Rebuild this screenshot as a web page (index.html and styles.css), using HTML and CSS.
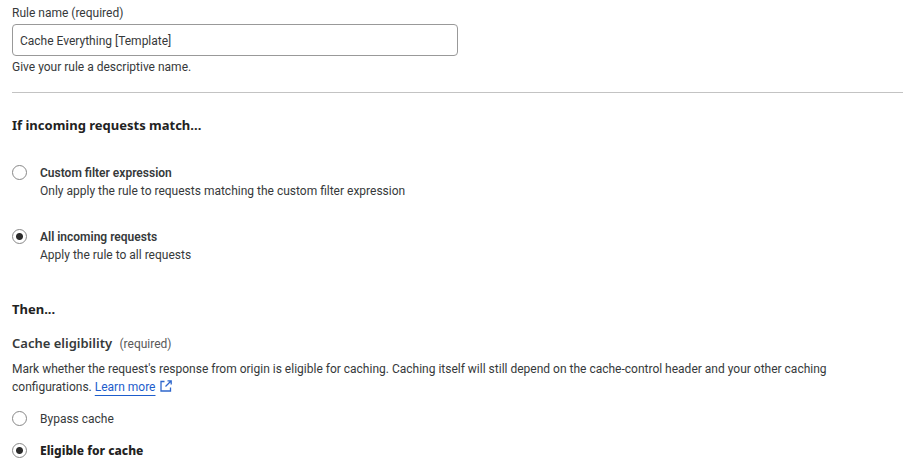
FILE: index.html
```html
<!DOCTYPE html>
<html lang="en">
<head>
<meta charset="utf-8">
<title>Cache rule</title>
<meta name="viewport" content="width=device-width, initial-scale=1.0">
<link rel="stylesheet" href="styles.css">
</head>
<body>
<form class="rule-form">
  <div class="field">
    <label for="rule-name">Rule name (required)</label>
    <input class="text-input" type="text" id="rule-name" value="Cache Everything [Template]" aria-describedby="rule-help">
    <p class="help" id="rule-help">Give your rule a descriptive name.</p>
  </div>

  <section class="match">
    <h2>If incoming requests match...</h2>
    <div class="filters">
      <label class="option">
        <input type="radio" name="match">
        <span><strong>Custom filter expression</strong><br>Only apply the rule to requests matching the custom filter expression</span>
      </label>
      <label class="option">
        <input type="radio" name="match" checked>
        <span><strong>All incoming requests</strong><br>Apply the rule to all requests</span>
      </label>
    </div>
  </section>

  <section class="then">
    <h2>Then...</h2>
    <h3>Cache eligibility <small>(required)</small></h3>
    <p>Mark whether the request's response from origin is eligible for caching. Caching itself will still depend on the cache-control header and your other caching configurations. <a href="#">Learn more</a>
      <svg class="external" viewBox="0 0 12 12" aria-hidden="true"><path d="M4.500 1.500H1V11h9.500V7.500M7.500.8h3.700V4.500M11 1L5.500 6.500"/></svg>
    </p>
    <div class="choices">
      <label class="option">
        <input type="radio" name="eligibility">
        <span>Bypass cache</span>
      </label>
      <label class="option">
        <input type="radio" name="eligibility" checked>
        <span class="selected">Eligible for cache</span>
      </label>
    </div>
  </section>
</form>
</body>
</html>
```

FILE: styles.css
```css
body {
  margin: 0;
  padding: 4px 8px 4px 12px;
  background: #fff;
  color: #36393a;
  font-family: Roboto, "Open Sans", sans-serif;
  font-size: 12px;
  line-height: 18px;
}

h2, h3, p {
  margin: 0;
}

h2, h3, .selected {
  font-family: "Noto Sans", sans-serif;
}

h2 {
  font-size: 13px;
  font-weight: 700;
  color: #222;
}

h3 {
  margin-top: 16px;
  font-size: 13px;
  font-weight: 600;
}

h3 small {
  margin-left: 4px;
  font-family: Roboto, sans-serif;
  font-size: 12px;
  font-weight: 400;
  color: #595959;
}

strong {
  font-weight: 600;
}

.field {
  padding-bottom: 16px;
  border-bottom: 1px solid #c3c3c3;
}

.field label {
  display: block;
}

.text-input {
  display: block;
  box-sizing: border-box;
  width: 50%;
  height: 32px;
  margin: 2px 0;
  padding: 2px 7px 0;
  border: 1px solid #999;
  border-radius: 4px;
  color: inherit;
  font: inherit;
}

.match {
  margin-top: 23px;
}

.filters {
  display: grid;
  gap: 28px;
  margin-top: 30px;
}

.option {
  display: flex;
  align-items: flex-start;
  gap: 13px;
}

.option input {
  appearance: none;
  box-sizing: border-box;
  flex: none;
  width: 15px;
  height: 15px;
  margin: 1px 0 0;
  border: 1px solid #888;
  border-radius: 50%;
  background: #fff;
}

.option input:checked {
  background: radial-gradient(circle, #2c2c2c 3px, #fff 4px);
}

.then {
  margin-top: 36px;
}

.then p {
  margin-top: 7px;
}

.then a {
  color: #1d5dcc;
  text-underline-offset: 4px;
}

.external {
  width: 12px;
  height: 12px;
  margin-left: 2px;
  vertical-align: -1px;
  fill: none;
  stroke: #2f67cc;
  stroke-width: 1.3;
}

.choices {
  display: grid;
  gap: 14px;
  margin-top: 14px;
}

.selected {
  font-weight: 800;
  color: #222;
}
```
